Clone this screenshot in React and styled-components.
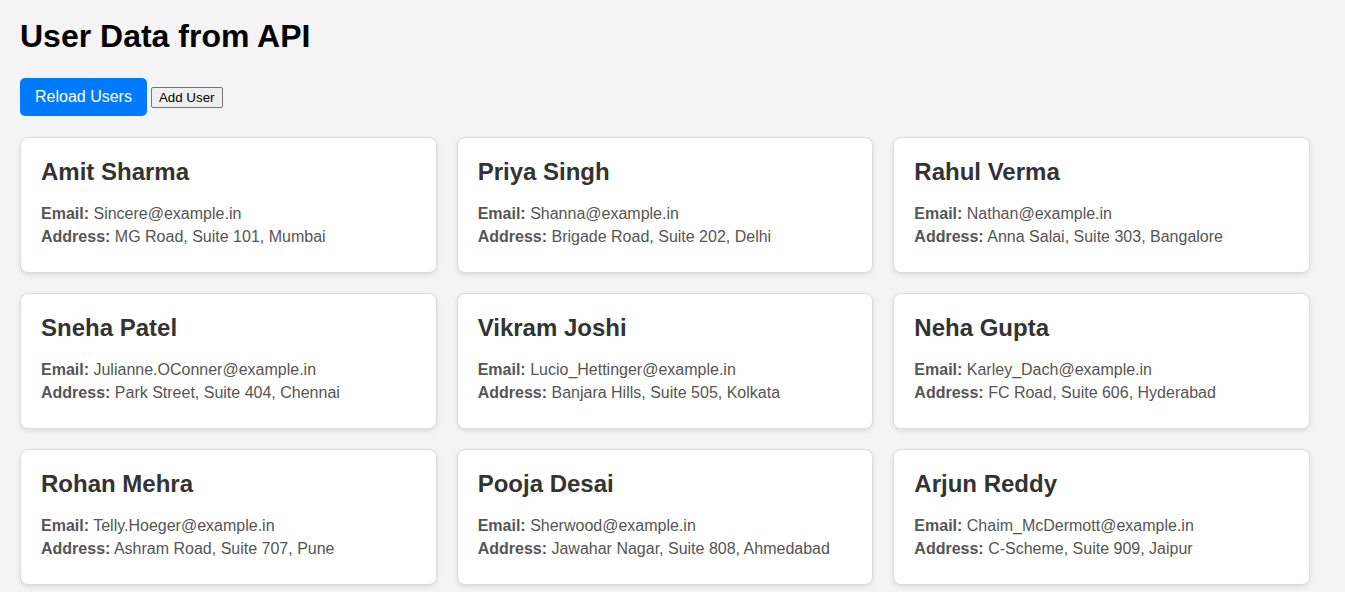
import React from "react";
import styled, { createGlobalStyle } from "styled-components";

const Global = createGlobalStyle`
  html, body { margin: 0; padding: 0; background: #f4f4f4; }
  body { font-family: Arial, "Liberation Sans", Helvetica, sans-serif; }
`;

const Page = styled.div`
  padding: 18px 35px 20px 20px;
`;

const Title = styled.h1`
  font-size: 32px;
  font-weight: bold;
  color: #000;
  margin: 0 0 23px;
`;

const Toolbar = styled.div`
  display: flex;
  align-items: center;
  gap: 4px;
  margin-bottom: 21px;
`;

const PrimaryButton = styled.button`
  font-family: Arial, "Liberation Sans", sans-serif;
  font-size: 16px;
  padding: 10px 15px;
  background: #007bff;
  color: #fff;
  border: none;
  border-radius: 5px;
  cursor: pointer;
`;

const PlainButton = styled.button`
  font-family: Arial, "Liberation Sans", sans-serif;
  font-size: 13.333px;
  padding: 1px 7px;
  background: #efefef;
  color: #000;
  border: 1px solid #767676;
  border-radius: 2px;
  height: 21px;
`;

const Grid = styled.div`
  display: grid;
  grid-template-columns: repeat(3, 1fr);
  gap: 20px;
`;

const Card = styled.div`
  background: #fff;
  border: 1px solid #ddd;
  border-radius: 8px;
  box-shadow: 0 2px 5px rgba(0, 0, 0, 0.1);
  padding: 20px;
`;

const Name = styled.h2`
  font-size: 24px;
  font-weight: bold;
  color: #333;
  margin: 0 0 19px;
`;

const Line = styled.p`
  margin: 5px 0;
  font-size: 16px;
  color: #555;
  &:last-child { margin-bottom: 6px; }
`;

const users = [
  ["Amit Sharma", "Sincere@example.in", "MG Road, Suite 101, Mumbai"],
  ["Priya Singh", "Shanna@example.in", "Brigade Road, Suite 202, Delhi"],
  ["Rahul Verma", "Nathan@example.in", "Anna Salai, Suite 303, Bangalore"],
  ["Sneha Patel", "Julianne.OConner@example.in", "Park Street, Suite 404, Chennai"],
  ["Vikram Joshi", "Lucio_Hettinger@example.in", "Banjara Hills, Suite 505, Kolkata"],
  ["Neha Gupta", "Karley_Dach@example.in", "FC Road, Suite 606, Hyderabad"],
  ["Rohan Mehra", "Telly.Hoeger@example.in", "Ashram Road, Suite 707, Pune"],
  ["Pooja Desai", "Sherwood@example.in", "Jawahar Nagar, Suite 808, Ahmedabad"],
  ["Arjun Reddy", "Chaim_McDermott@example.in", "C-Scheme, Suite 909, Jaipur"],
];

export default function App() {
  return (
    <Page>
      <Global />
      <Title>User Data from API</Title>
      <Toolbar>
        <PrimaryButton>Reload Users</PrimaryButton>
        <PlainButton>Add User</PlainButton>
      </Toolbar>
      <Grid>
        {users.map(([name, email, address]) => (
          <Card key={name}>
            <Name>{name}</Name>
            <Line><strong>Email:</strong> {email}</Line>
            <Line><strong>Address:</strong> {address}</Line>
          </Card>
        ))}
      </Grid>
    </Page>
  );
}
